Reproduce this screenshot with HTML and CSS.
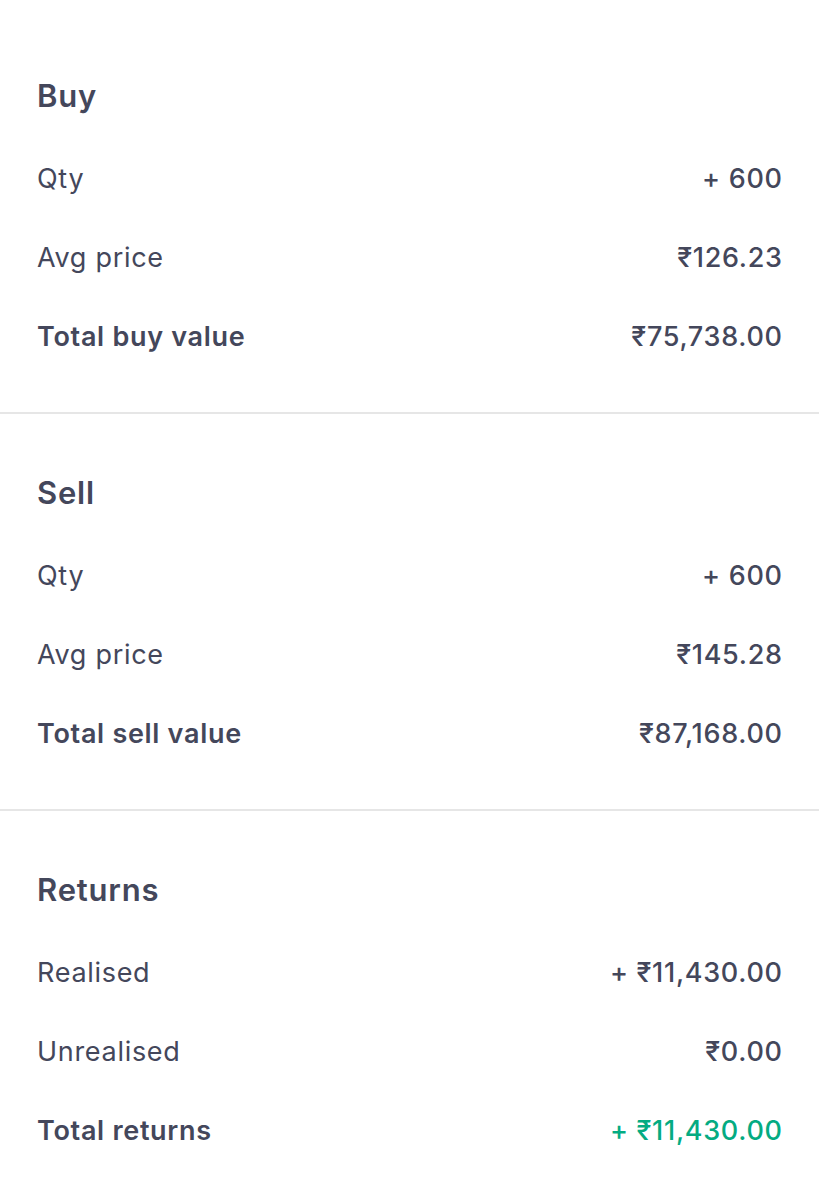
FILE: index.html
```
<!DOCTYPE html>
<html lang="en">
<head>
  <meta charset="UTF-8" />
  <meta name="viewport" content="width=device-width, initial-scale=1.0"/>
  <title>Trade Summary</title>
  <link rel="stylesheet" href="styles.css">
</head>
<body>
  <div class="summary">
    <div class="section">
      <h2>Buy</h2>
      <div class="row"><span class="label">Qty</span><span class="value">+ 600</span></div>
      <div class="row"><span class="label">Avg price</span><span class="value">₹126.23</span></div>
      <div class="row total"><span class="label">Total buy value</span><span class="value">₹75,738.00</span></div>
    </div>

    <div class="section">
      <h2>Sell</h2>
      <div class="row"><span class="label">Qty</span><span class="value">+ 600</span></div>
      <div class="row"><span class="label">Avg price</span><span class="value">₹145.28</span></div>
      <div class="row total"><span class="label">Total sell value</span><span class="value">₹87,168.00</span></div>
    </div>

    <div class="section">
      <h2>Returns</h2>
      <div class="row"><span class="label">Realised</span><span class="value">+ ₹11,430.00</span></div>
      <div class="row"><span class="label">Unrealised</span><span class="value">₹0.00</span></div>
      <div class="row total"><span class="label">Total returns</span><span class="value positive">+ ₹11,430.00</span></div>
    </div>
  </div>
</body>
</html>
```

FILE: styles.css
```
body {
  margin: 0;
  padding-top: 17px;
  background-color: #fff;
  font-family: Inter, 'Noto Sans', sans-serif;
  color: #44475b;
}

.section {
  padding: 59px 37px 36px;
  border-bottom: 2px solid #e6e6e6;
}

.section:last-child {
  border-bottom: none;
}

h2 {
  margin: 0 0 23px;
  font-size: 31px;
  line-height: 40px;
  font-weight: 600;
  letter-spacing: 0.8px;
}

.row {
  display: flex;
  justify-content: space-between;
  align-items: center;
  height: 79px;
  font-size: 27px;
  letter-spacing: 0.7px;
}

.label {
  font-weight: 400;
}

.value {
  font-weight: 500;
  margin-right: -0.7px;
}

.total .label {
  font-weight: 600;
}

.positive {
  color: #04ab82;
}
```
